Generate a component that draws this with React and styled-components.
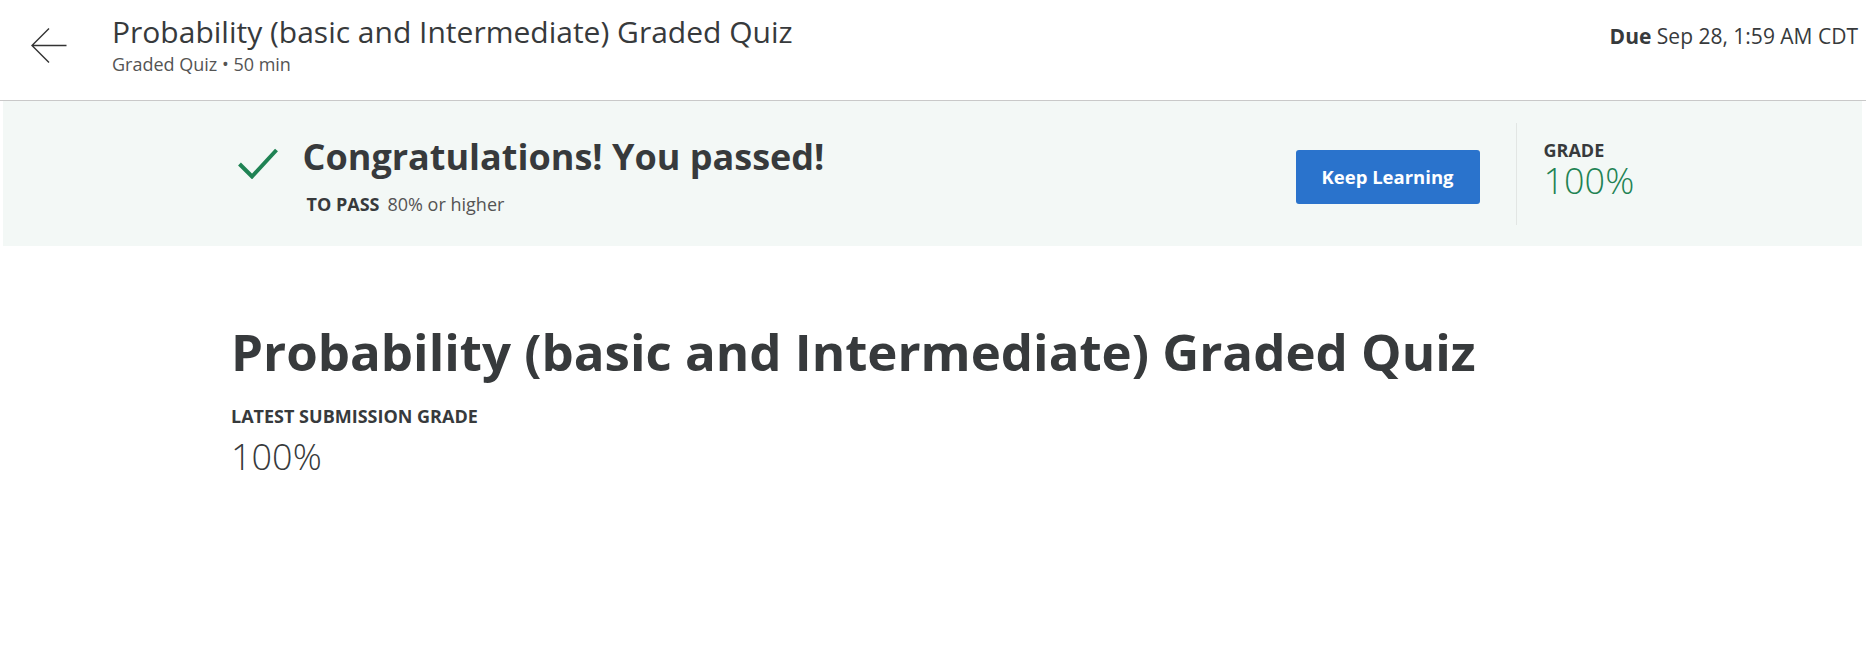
import React from "react";
import styled, { createGlobalStyle } from "styled-components";

const GlobalStyle = createGlobalStyle`
  html, body {
    margin: 0;
    padding: 0;
    background: #fff;
    font-family: "Open Sans", "Liberation Sans", sans-serif;
    color: #373a3c;
  }
`;

const Header = styled.header`
  display: flex;
  align-items: flex-start;
  height: 101px;
  box-sizing: border-box;
  padding: 14px 8px 0 31px;
  border-bottom: 1px solid #c9c9c9;
`;

const BackButton = styled.button`
  width: 36px;
  height: 36px;
  margin-top: 14px;
  padding: 0;
  border: none;
  background: none;
  cursor: pointer;
  color: #333;
`;

const TitleBlock = styled.div`
  margin-left: 45px;
  flex: 1;
`;

const HeaderTitle = styled.h1`
  margin: 0;
  font-size: 30px;
  line-height: 36px;
  font-weight: 400;
  color: #373a3c;
`;

const HeaderSub = styled.div`
  margin-top: 2px;
  font-size: 18px;
  line-height: 24px;
  color: #545454;
`;

const Due = styled.div`
  margin-top: 8px;
  font-size: 21px;
  line-height: 28px;
  color: #373a3c;

  strong {
    font-weight: 700;
  }
`;

const Banner = styled.section`
  margin: 0 4px 0 3px;
  height: 145px;
  background: #f3f8f6;
  display: flex;
`;

const BannerInner = styled.div`
  width: 1404px;
  margin: 0 auto;
  display: flex;
  align-items: center;
  justify-content: space-between;
`;

const PassGroup = styled.div`
  display: flex;
  align-items: flex-start;
  padding-left: 7px;
  margin-top: 2px;
`;

const CheckIcon = styled.svg`
  width: 40px;
  height: 31px;
  margin-top: 14px;
  margin-right: 25px;
`;

const PassTitle = styled.h2`
  margin: 0;
  font-size: 36px;
  line-height: 46px;
  font-weight: 700;
  color: #373a3c;
`;

const PassInfo = styled.div`
  margin-top: 12px;
  padding-left: 4px;
  font-size: 18px;
  line-height: 24px;
  color: #545454;

  strong {
    color: #373a3c;
    margin-right: 8px;
  }
`;

const RightGroup = styled.div`
  display: flex;
  align-items: center;
`;

const PrimaryButton = styled.button`
  width: 184px;
  height: 54px;
  margin-top: 6px;
  border: none;
  border-radius: 3px;
  background: #2a73cc;
  color: #fff;
  font-family: "Open Sans", "Liberation Sans", sans-serif;
  font-size: 18.5px;
  font-weight: 700;
  cursor: pointer;
`;

const Divider = styled.div`
  width: 1px;
  height: 102px;
  background: #e2e6e4;
  margin: 0 27px 0 36px;
`;

const GradeBlock = styled.div`
  width: 91px;
  margin-bottom: 5px;
`;

const Label = styled.div`
  font-size: 18px;
  line-height: ${({ $tight }) => ($tight ? "20px" : "24px")};
  font-weight: 700;
  color: #373a3c;
`;

const BigValue = styled.div`
  font-size: 36px;
  line-height: 42px;
  font-weight: 300;
  color: ${({ $green }) => ($green ? "#1f8354" : "#373a3c")};
`;

const Main = styled.main`
  width: 1404px;
  margin: 0 auto;
  padding-top: 73px;
`;

const MainTitle = styled.h1`
  margin: 0;
  font-size: 51px;
  line-height: 64px;
  font-weight: 700;
  color: #373a3c;
`;

const SubmissionLabel = styled(Label)`
  margin-top: 21px;
`;

const SubmissionValue = styled(BigValue)`
  margin-top: 7px;
  line-height: 44px;
`;

export default function App() {
  return (
    <>
      <GlobalStyle />
      <Header>
        <BackButton aria-label="Back">
          <svg width="36" height="36" viewBox="0 0 36 36" fill="none">
            <path
              d="M18 0.5 L1 17.5 L18 34.5 M1 17.5 H35.5"
              stroke="currentColor"
              strokeWidth="1.4"
            />
          </svg>
        </BackButton>
        <TitleBlock>
          <HeaderTitle>Probability (basic and Intermediate) Graded Quiz</HeaderTitle>
          <HeaderSub>Graded Quiz • 50 min</HeaderSub>
        </TitleBlock>
        <Due>
          <strong>Due</strong> Sep 28, 1:59 AM CDT
        </Due>
      </Header>

      <Banner>
        <BannerInner>
          <PassGroup>
            <CheckIcon viewBox="0 0 40 31" fill="none">
              <path
                d="M1.5 16 L14 28.5 L38.5 2"
                stroke="#1f8354"
                strokeWidth="4"
              />
            </CheckIcon>
            <div>
              <PassTitle>Congratulations! You passed!</PassTitle>
              <PassInfo>
                <strong>TO PASS</strong>80% or higher
              </PassInfo>
            </div>
          </PassGroup>
          <RightGroup>
            <PrimaryButton>Keep Learning</PrimaryButton>
            <Divider />
            <GradeBlock>
              <Label $tight>GRADE</Label>
              <BigValue $green>100%</BigValue>
            </GradeBlock>
          </RightGroup>
        </BannerInner>
      </Banner>

      <Main>
        <MainTitle>Probability (basic and Intermediate) Graded Quiz</MainTitle>
        <SubmissionLabel>LATEST SUBMISSION GRADE</SubmissionLabel>
        <SubmissionValue>100%</SubmissionValue>
      </Main>
    </>
  );
}
